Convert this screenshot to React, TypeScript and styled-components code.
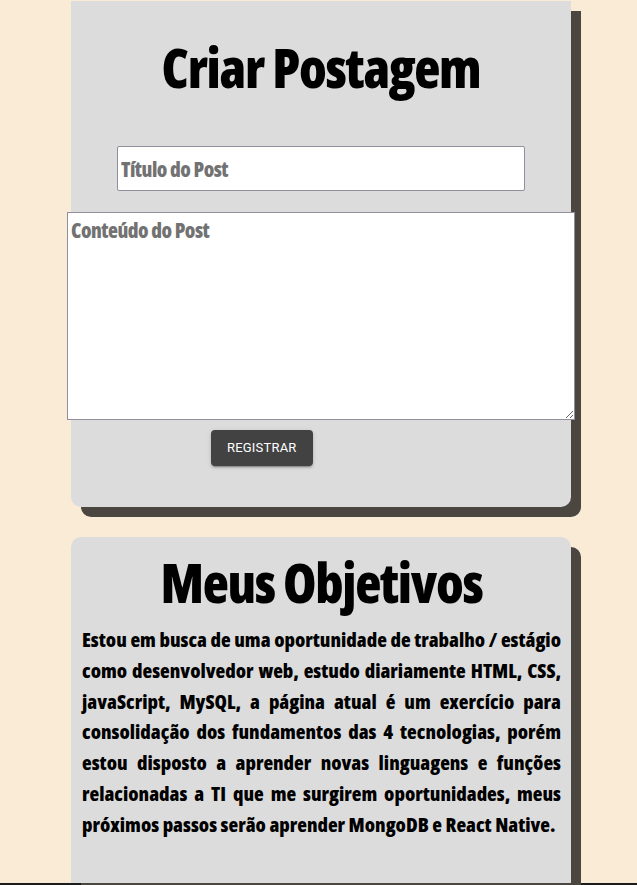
import React from "react";
import styled, { createGlobalStyle } from "styled-components";

const GlobalStyle = createGlobalStyle`
  *, *::before, *::after { box-sizing: border-box; }
  html, body { margin: 0; padding: 0; }
  body {
    background: #faebd7;
    font-family: "Open Sans", "DejaVu Sans", sans-serif;
    font-stretch: 75%;
  }
`;

const Page = styled.main`
  display: flex;
  flex-direction: column;
  align-items: flex-start;
  gap: 30px;
  padding: 1px 0 0 71px;
`;

const Card = styled.section<{ $flatTop?: boolean; $flatBottom?: boolean }>`
  width: 500px;
  background: #dcdcdc;
  border-radius: ${(p) => (p.$flatTop ? "0 0" : "10px 10px")}
    ${(p) => (p.$flatBottom ? "0 0" : "10px 10px")};
  box-shadow: 10px 10px 0 #4b463f;
  display: flex;
  flex-direction: column;
  align-items: center;
`;

const FormCard = styled(Card)`
  padding: 29px 0 41px;
`;

const InfoCard = styled(Card)`
  padding: 8px 10px 0 11px;
  min-height: 346px;
`;

const Title = styled.h1`
  margin: 0;
  font-family: "Open Sans", "DejaVu Sans", sans-serif;
  font-stretch: 75%;
  font-weight: 800;
  font-size: 54px;
  line-height: 74px;
  letter-spacing: -1.3px;
  color: #000;
  text-align: center;
`;

const fieldText = `
  font-family: "Open Sans", "DejaVu Sans", sans-serif;
  font-stretch: 75%;
  font-weight: 800;
  font-size: 20.5px;
  letter-spacing: -0.5px;
  color: #222;
  background: #fff;
  border: 1px solid #8f8f9d;
  outline: none;
  &::placeholder { color: #727272; opacity: 1; }
`;

const TitleInput = styled.input`
  ${fieldText}
  margin-top: 42px;
  width: 408px;
  height: 45px;
  padding: 0 3px;
  border-radius: 2px;
`;

const ContentArea = styled.textarea`
  ${fieldText}
  margin-top: 21px;
  width: 508px;
  height: 208px;
  flex-shrink: 0;
  padding: 2px 3px;
  line-height: 30px;
  resize: both;
`;

const SubmitButton = styled.button`
  align-self: flex-start;
  margin: 10px 0 0 140px;
  height: 36px;
  padding: 6px 16px;
  border: none;
  border-radius: 4px;
  background: #424242;
  color: #fff;
  font-family: Roboto, "Liberation Sans", sans-serif;
  font-weight: 400;
  font-size: 13px;
  line-height: 24px;
  letter-spacing: 0.2px;
  text-transform: uppercase;
  cursor: pointer;
  box-shadow: 0 3px 1px -2px rgba(0, 0, 0, 0.2), 0 2px 2px 0 rgba(0, 0, 0, 0.14),
    0 1px 5px 0 rgba(0, 0, 0, 0.12);
`;

const Paragraph = styled.p`
  margin: 6px 0 0;
  width: 479px;
  font-family: "Open Sans", "DejaVu Sans", sans-serif;
  font-stretch: 75%;
  font-weight: 800;
  font-size: 20px;
  line-height: 30.8px;
  color: #000;
  text-align: justify;
`;

const Footer = styled.footer`
  height: 60px;
  background: #1c1c1c;
`;

export default function App() {
  return (
    <>
      <GlobalStyle />
      <Page>
        <FormCard $flatTop as="form" onSubmit={(e: React.FormEvent) => e.preventDefault()}>
          <Title>Criar Postagem</Title>
          <TitleInput type="text" placeholder="Título do Post" />
          <ContentArea placeholder="Conteúdo do Post" />
          <SubmitButton type="submit">Registrar</SubmitButton>
        </FormCard>
        <InfoCard $flatBottom>
          <Title>Meus Objetivos</Title>
          <Paragraph>
            Estou em busca de uma oportunidade de trabalho / estágio como desenvolvedor web,
            estudo diariamente HTML, CSS, javaScript, MySQL, a página atual é um exercício para
            consolidação dos fundamentos das 4 tecnologias, porém estou disposto a aprender novas
            linguagens e funções relacionadas a TI que me surgirem oportunidades, meus próximos
            passos serão aprender MongoDB e React Native.
          </Paragraph>
        </InfoCard>
      </Page>
      <Footer />
    </>
  );
}
